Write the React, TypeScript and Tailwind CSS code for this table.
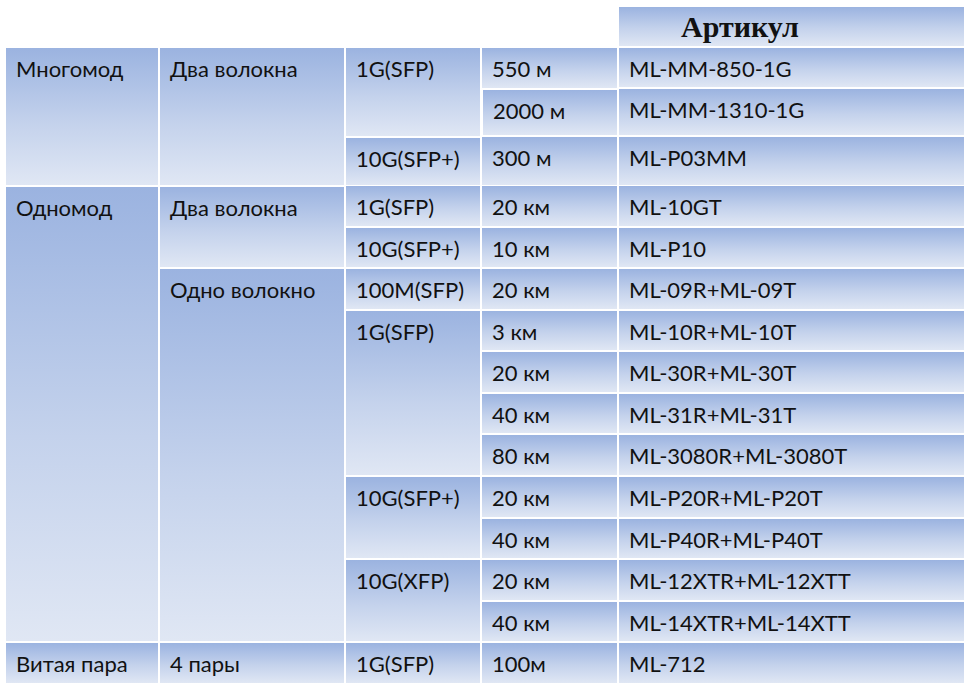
import React from "react";

type Cell = {
  text: string;
  col: string;
  row: string;
  extra?: string;
};

const cellBg =
  "bg-linear-to-b from-[#9bb3e0] via-[#c4d2ec] via-55% to-[#e0e7f4]";

// Grid positions for every cell in the table (header row is row 1)
const cells: Cell[] = [
  { text: "Многомод", col: "col-start-1", row: "row-start-2 row-span-3", extra: "mb-[-1px]" },
  { text: "Два волокна", col: "col-start-2", row: "row-start-2 row-span-3", extra: "mb-[-1px]" },
  { text: "1G(SFP)", col: "col-start-3", row: "row-start-2 row-span-2", extra: "mb-[-1px]" },
  { text: "10G(SFP+)", col: "col-start-3", row: "row-start-4", extra: "mt-[1px] mb-[-1px]" },
  { text: "550 м", col: "col-start-4", row: "row-start-2", extra: "mb-[-1px]" },
  { text: "2000 м", col: "col-start-4", row: "row-start-3", extra: "ml-[1px] mt-[1px]" },
  { text: "300 м", col: "col-start-4", row: "row-start-4", extra: "mb-[-1px]" },
  { text: "ML-MM-850-1G", col: "col-start-5", row: "row-start-2" },
  { text: "ML-MM-1310-1G", col: "col-start-5", row: "row-start-3" },
  { text: "ML-P03MM", col: "col-start-5", row: "row-start-4", extra: "mb-[-1px]" },

  { text: "Одномод", col: "col-start-1", row: "row-start-5 row-span-11", extra: "mt-[1px]" },
  { text: "Два волокна", col: "col-start-2", row: "row-start-5 row-span-2", extra: "mt-[1px]" },
  { text: "Одно волокно", col: "col-start-2", row: "row-start-7 row-span-9" },
  { text: "1G(SFP)", col: "col-start-3", row: "row-start-5" },
  { text: "10G(SFP+)", col: "col-start-3", row: "row-start-6" },
  { text: "100M(SFP)", col: "col-start-3", row: "row-start-7" },
  { text: "1G(SFP)", col: "col-start-3", row: "row-start-8 row-span-4" },
  { text: "10G(SFP+)", col: "col-start-3", row: "row-start-12 row-span-2" },
  { text: "10G(XFP)", col: "col-start-3", row: "row-start-14 row-span-2" },

  { text: "20 км", col: "col-start-4", row: "row-start-5" },
  { text: "10 км", col: "col-start-4", row: "row-start-6" },
  { text: "20 км", col: "col-start-4", row: "row-start-7" },
  { text: "3 км", col: "col-start-4", row: "row-start-8" },
  { text: "20 км", col: "col-start-4", row: "row-start-9" },
  { text: "40 км", col: "col-start-4", row: "row-start-10" },
  { text: "80 км", col: "col-start-4", row: "row-start-11" },
  { text: "20 км", col: "col-start-4", row: "row-start-12" },
  { text: "40 км", col: "col-start-4", row: "row-start-13" },
  { text: "20 км", col: "col-start-4", row: "row-start-14" },
  { text: "40 км", col: "col-start-4", row: "row-start-15" },

  { text: "ML-10GT", col: "col-start-5", row: "row-start-5" },
  { text: "ML-P10", col: "col-start-5", row: "row-start-6" },
  { text: "ML-09R+ML-09T", col: "col-start-5", row: "row-start-7" },
  { text: "ML-10R+ML-10T", col: "col-start-5", row: "row-start-8" },
  { text: "ML-30R+ML-30T", col: "col-start-5", row: "row-start-9" },
  { text: "ML-31R+ML-31T", col: "col-start-5", row: "row-start-10" },
  { text: "ML-3080R+ML-3080T", col: "col-start-5", row: "row-start-11" },
  { text: "ML-P20R+ML-P20T", col: "col-start-5", row: "row-start-12" },
  { text: "ML-P40R+ML-P40T", col: "col-start-5", row: "row-start-13" },
  { text: "ML-12XTR+ML-12XTT", col: "col-start-5", row: "row-start-14" },
  { text: "ML-14XTR+ML-14XTT", col: "col-start-5", row: "row-start-15" },

  { text: "Витая пара", col: "col-start-1", row: "row-start-16" },
  { text: "4 пары", col: "col-start-2", row: "row-start-16" },
  { text: "1G(SFP)", col: "col-start-3", row: "row-start-16" },
  { text: "100м", col: "col-start-4", row: "row-start-16" },
  { text: "ML-712", col: "col-start-5", row: "row-start-16" },
];

export default function App() {
  return (
    <div className="h-[693px] w-[972px] overflow-hidden bg-white pl-[6px] pt-[7px]">
      <div
        className="grid w-[958px] grid-cols-[152px_184px_134px_135px_345px] grid-rows-[39px_39px_46px_47px_repeat(12,39.58px)] gap-[2px] text-[22px] leading-[24px] text-[#111]"
        style={{ fontFamily: "Lato, 'Open Sans', sans-serif" }}
      >
        {/* Header */}
        <div
          className={`col-start-5 row-start-1 ${cellBg} pl-[62px] pt-[5px] text-[30px] font-bold leading-[30px]`}
          style={{ fontFamily: "'Liberation Serif', 'Times New Roman', serif" }}
        >
          Артикул
        </div>

        {cells.map((c, i) => (
          <div
            key={i}
            className={`${c.col} ${c.row} ${c.extra ?? ""} ${cellBg} pl-[10px] pt-[9px] whitespace-nowrap`}
          >
            {c.text}
          </div>
        ))}
      </div>
    </div>
  );
}
